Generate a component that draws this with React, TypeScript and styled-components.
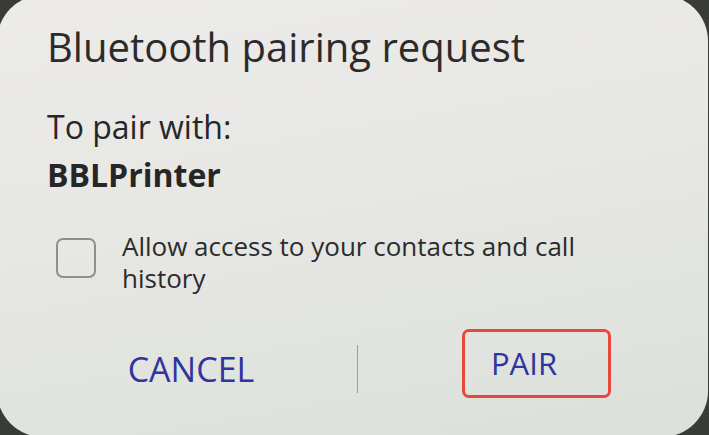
import styled, { createGlobalStyle } from "styled-components";

const Global = createGlobalStyle`
  html, body {
    margin: 0;
    padding: 0;
    height: 100%;
    background: #393b39;
    overflow: hidden;
  }
  #root {
    height: 100%;
  }
`;

const Dialog = styled.div`
  box-sizing: border-box;
  width: 711px;
  height: 442px;
  margin: -5px 0 0 -3px;
  padding-top: 28px;
  display: flex;
  flex-direction: column;
  border-radius: 46px;
  background: linear-gradient(170deg, #ecebe9 0%, #e7e7e4 45%, #dbe0da 100%);
  font-family: "Open Sans", "Noto Sans", sans-serif;
  color: #2a2a2a;
`;

const Title = styled.h1`
  margin: 0;
  padding-left: 50px;
  font-size: 40px;
  font-weight: 400;
  line-height: 48px;
  color: #2b2b2b;
`;

const Message = styled.p<{ $bold?: boolean; $gap?: number }>`
  margin: ${(p) => p.$gap ?? 0}px 0 0;
  padding-left: 50px;
  font-size: 32px;
  line-height: 48px;
  font-weight: ${(p) => (p.$bold ? 700 : 400)};
  color: #262626;
`;

const OptionRow = styled.label`
  display: flex;
  align-items: flex-start;
  gap: 26px;
  margin-top: 31px;
  padding-left: 59px;
`;

const Checkbox = styled.span`
  box-sizing: border-box;
  flex: none;
  width: 40px;
  height: 40px;
  margin-top: 8px;
  border: 2px solid #8e8f8d;
  border-radius: 7px;
`;

const OptionText = styled.span`
  width: 480px;
  font-size: 26px;
  line-height: 32px;
  color: #2c2c2c;
`;

const Actions = styled.div`
  display: flex;
  align-items: center;
  height: 48px;
  margin-top: 51px;
  padding: 0 18px 0 28px;
`;

const ActionButton = styled.button<{ $size: number; $lift?: number }>`
  position: relative;
  flex: 1;
  height: 48px;
  padding: 0 0 ${(p) => (p.$lift ?? 0) * 2}px;
  border: none;
  background: transparent;
  font-family: "Open Sans", "Noto Sans", sans-serif;
  font-size: ${(p) => p.$size}px;
  font-weight: 400;
  color: #2f34a0;
  line-height: 1;
  cursor: pointer;
`;

const Divider = styled.span`
  flex: none;
  width: 1px;
  height: 48px;
  background: #9d9f9c;
`;

const Highlight = styled.span`
  position: absolute;
  left: 50%;
  top: -16px;
  margin-left: -62px;
  width: 149px;
  height: 69px;
  box-sizing: border-box;
  border: 3px solid #e9463c;
  border-radius: 7px;
  pointer-events: none;
`;

export default function App() {
  return (
    <>
      <Global />
      <Dialog>
        <Title>Bluetooth pairing request</Title>
        <Message $gap={32}>To pair with:</Message>
        <Message $bold>BBLPrinter</Message>
        <OptionRow>
          <Checkbox />
          <OptionText>Allow access to your contacts and call history</OptionText>
        </OptionRow>
        <Actions>
          <ActionButton $size={34}>CANCEL</ActionButton>
          <Divider />
          <ActionButton $size={31} $lift={6}>
            PAIR
            <Highlight />
          </ActionButton>
        </Actions>
      </Dialog>
    </>
  );
}
